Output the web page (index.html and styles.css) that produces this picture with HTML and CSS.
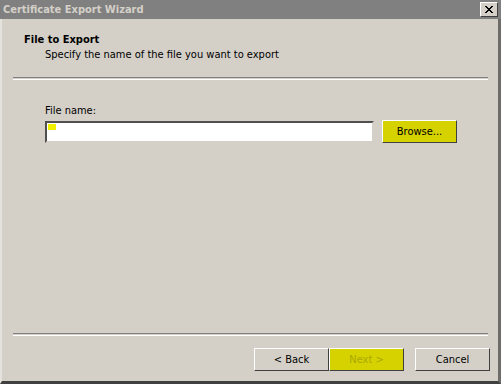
FILE: index.html
```html
<!DOCTYPE html>
<html lang="en">
<head>
    <meta charset="UTF-8">
    <meta name="viewport" content="width=device-width, initial-scale=1.0">
    <title>Certificate Export Wizard</title>
    <link rel="stylesheet" href="styles.css">
</head>
<body>

<div class="window">
    <!-- Title bar -->
    <div class="titlebar">
        <span class="title">Certificate Export Wizard</span>
        <button class="close-btn">
            <svg width="8" height="7" viewBox="0 0 8 7">
                <path d="M0 0h2v1h1v1h2v-1h1v-1h2v1h-1v1h-1v1h-1v1h1v1h1v1h1v1h-2v-1h-1v-1h-2v1h-1v1h-2v-1h1v-1h1v-1h1v-1h-1v-1h-1v-1h-1z" fill="#000"/>
            </svg>
        </button>
    </div>

    <!-- Header -->
    <div class="header">
        <div class="header-title">File to Export</div>
        <div class="header-sub">Specify the name of the file you want to export</div>
    </div>
    <div class="separator"></div>

    <!-- Page content -->
    <div class="content">
        <label for="fileName" class="field-label">File name:</label>
        <div class="field-row">
            <div class="textbox" id="fileName"><span class="caret"></span></div>
            <button class="btn btn-hl">Browse...</button>
        </div>
    </div>

    <div class="separator"></div>

    <!-- Wizard buttons -->
    <div class="buttons">
        <button class="btn">&lt; Back</button>
        <button class="btn btn-hl" disabled>Next &gt;</button>
        <button class="btn cancel-btn">Cancel</button>
    </div>
</div>

</body>
</html>
```

FILE: styles.css
```css
body {
    margin: 0;
    font-family: "DejaVu Sans Condensed", "DejaVu Sans", Tahoma, sans-serif;
    font-stretch: condensed;
    font-size: 11px;
}
.window {
    width: 501px;
    height: 384px;
    box-sizing: border-box;
    background-color: #d4d0c8;
    border-left: 2px solid #e4e2dc;
    border-right: 3px solid #6e6c68;
    border-bottom: 3px solid #404040;
    display: flex;
    flex-direction: column;
    color: #000;
}
.titlebar {
    height: 19px;
    margin: 0 -3px 0 -2px;
    background-color: #808080;
    display: flex;
    align-items: center;
    justify-content: space-between;
    padding: 0 3px 0 3px;
}
.title {
    color: #d4d0c8;
    font-weight: bold;
    font-size: 11px;
}
.close-btn {
    width: 18px;
    height: 15px;
    padding: 0;
    background-color: #d4d0c8;
    border: 1px solid;
    border-color: #fff #404040 #404040 #fff;
    display: flex;
    align-items: center;
    justify-content: center;
}
.header {
    padding: 14px 0 0 22px;
    height: 44px;
}
.header-title {
    font-weight: bold;
    line-height: 14px;
}
.header-sub {
    padding-left: 21px;
    margin-top: 1px;
    line-height: 14px;
}
.separator {
    margin: 0 10px 0 11px;
    height: 1px;
    border-top: 1px solid #808080;
    border-bottom: 1px solid #fff;
}
.content {
    flex: 1;
    padding: 24px 0 0 43px;
}
.field-label {
    display: block;
    line-height: 14px;
    margin-bottom: 2px;
}
.field-row {
    display: flex;
    align-items: center;
    gap: 8px;
}
.textbox {
    width: 325px;
    height: 18px;
    background-color: #fff;
    border: 2px solid;
    border-color: #505050 #d4d0c8 #d4d0c8 #505050;
    box-shadow: 0 0 0 1px #fff inset;
    position: relative;
}
.caret {
    position: absolute;
    left: 1px;
    top: 1px;
    width: 8px;
    height: 6px;
    background-color: #f0f000;
}
.btn {
    width: 75px;
    height: 23px;
    padding: 0;
    font-family: inherit;
    font-stretch: inherit;
    font-size: 11px;
    color: #000;
    background-color: #d4d0c8;
    border: 1px solid;
    border-color: #fff #404040 #404040 #fff;
    box-shadow: -1px -1px 0 #d4d0c8 inset, 1px 1px 0 #d4d0c8 inset;
}
.btn-hl {
    background-color: #d6d200;
    box-shadow: none;
    border-color: #fff #404040 #404040 #fff;
}
.btn:disabled {
    color: #aaa800;
}
.buttons {
    height: 45px;
    display: flex;
    padding: 12px 0 0 252px;
    box-sizing: border-box;
}
.cancel-btn {
    margin-left: 11px;
}
```
